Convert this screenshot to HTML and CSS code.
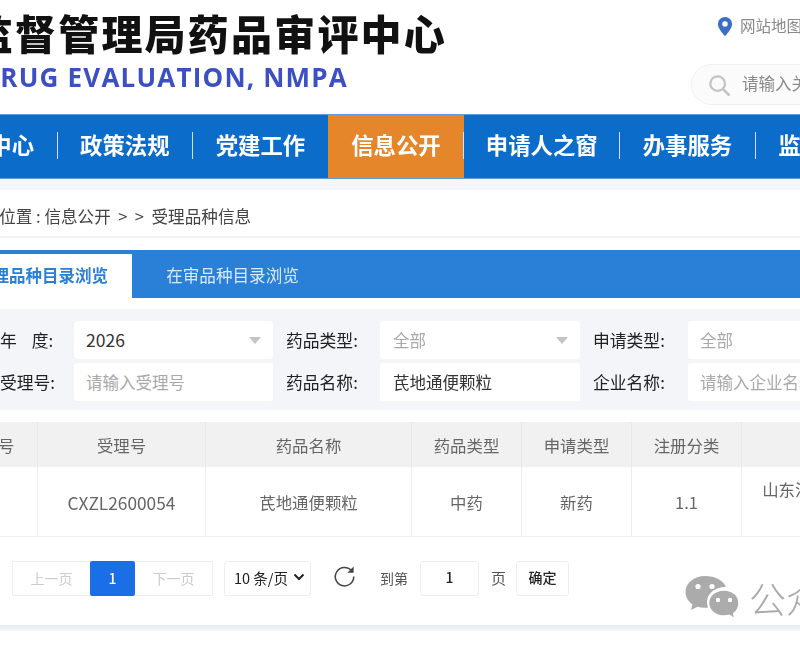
FILE: index.html
```html
<!DOCTYPE html>
<html lang="zh-CN">
<head>
<meta charset="utf-8">
<title>受理品种信息</title>
<link rel="stylesheet" href="styles.css">
</head>
<body>
<div class="page">
  <header class="header">
    <div class="brand">
      <div class="brand-cn">国家药品监督管理局药品审评中心</div>
      <div class="brand-en">CENTER FOR DRUG EVALUATION, NMPA</div>
    </div>
    <div class="tools">
      <div class="sitemap">
        <svg class="pin" viewBox="0 0 16 20" width="16" height="19"><path fill="#3b6fc4" fill-rule="evenodd" d="M8 0a7.500 7.500 0 0 0-7.500 7.500C.5 12.500 8 20 8 20s7.500-7.500 7.500-12.500A7.500 7.500 0 0 0 8 0zm0 10.300a2.900 2.900 0 1 1 0-5.800 2.900 2.900 0 0 1 0 5.800z"/></svg>
        <span>网站地图</span>
      </div>
      <div class="search">
        <svg viewBox="0 0 24 24" width="22" height="22"><circle cx="10.500" cy="10.500" r="8" fill="none" stroke="#c4c4c4" stroke-width="2.500"/><path d="M16.500 16.500l6 6" stroke="#c4c4c4" stroke-width="3" stroke-linecap="round"/></svg>
        <span>请输入关键字</span>
      </div>
    </div>
  </header>

  <nav class="nav">
    <a class="nav-item">审评中心</a><i class="nav-sep"></i>
    <a class="nav-item">政策法规</a><i class="nav-sep"></i>
    <a class="nav-item">党建工作</a><i class="nav-sep"></i>
    <a class="nav-item active">信息公开</a><i class="nav-sep"></i>
    <a class="nav-item wide">申请人之窗</a><i class="nav-sep"></i>
    <a class="nav-item">办事服务</a><i class="nav-sep"></i>
    <a class="nav-item">监管动态</a>
  </nav>
  <div class="band"></div>

  <div class="crumb">当前位置 : 信息公开 &nbsp;&gt; &nbsp;&gt;&nbsp; 受理品种信息</div>

  <div class="tabs">
    <div class="tab active">受理品种目录浏览</div>
    <div class="tab">在审品种目录浏览</div>
  </div>

  <section class="filters">
    <div class="frow">
      <label class="lab lab1"><span class="gap">年</span>度:</label>
      <div class="field w1 val year">2026<b class="caret"></b></div>
      <label class="lab lab2">药品类型:</label>
      <div class="field w2 ph">全部<b class="caret"></b></div>
      <label class="lab lab3">申请类型:</label>
      <div class="field w3 ph">全部</div>
    </div>
    <div class="frow">
      <label class="lab lab1">受理号:</label>
      <div class="field w1 ph">请输入受理号</div>
      <label class="lab lab2">药品名称:</label>
      <div class="field w2 val">芪地通便颗粒</div>
      <label class="lab lab3">企业名称:</label>
      <div class="field w3 ph">请输入企业名称</div>
    </div>
  </section>

  <table class="grid">
    <colgroup>
      <col class="c1"><col class="c2"><col class="c3"><col class="c4"><col class="c4"><col class="c4"><col class="c5">
    </colgroup>
    <thead>
      <tr><th>序号</th><th>受理号</th><th>药品名称</th><th>药品类型</th><th>申请类型</th><th>注册分类</th><th>企业名称</th></tr>
    </thead>
    <tbody>
      <tr><td class="num">1</td><td class="code">CXZL2600054</td><td>芪地通便颗粒</td><td>中药</td><td>新药</td><td>1.1</td><td class="co">山东汉方制药有限公司</td></tr>
    </tbody>
  </table>

  <div class="pager">
    <div class="pbox prev">上一页</div>
    <div class="pcur">1</div>
    <div class="pbox next">下一页</div>
    <div class="psize">10 条/页<svg viewBox="0 0 12 8" width="12" height="8"><path d="M1.500 1.500L6 6l4.500-4.500" fill="none" stroke="#222" stroke-width="2"/></svg></div>
    <svg class="refresh" viewBox="0 0 24 24" width="23" height="23"><path d="M19.500 6.200A9.600 9.600 0 1 0 21.600 12" fill="none" stroke="#444" stroke-width="1.600"/><path d="M21.500 1.500v6.500h-6.500z" fill="#444"/></svg>
    <span class="ptxt goto">到第</span>
    <div class="pinput">1</div>
    <span class="ptxt pg">页</span>
    <div class="pok">确定</div>
  </div>
  <div class="shadow"></div>

  <div class="mark">
    <svg viewBox="0 0 54 44" width="54" height="44">
      <path fill="#ababab" d="M20 0C9 0 .5 7.200.5 16c0 5 2.700 9.400 7 12.400L6 34l6.300-3.300c2.400.7 5 1.100 7.700 1.100 1 0 2-.1 3-.2-.6-1.700-1-3.600-1-5.500C22 17.500 30.500 11 40 11c.5 0 .8 0 1 .1C38.500 4.600 30 0 20 0z"/>
      <path fill="#ababab" stroke="#fff" stroke-width="1.500" d="M39 14c-8.700 0-15.500 5.800-15.500 13s6.800 13 15.500 13c2 0 3.800-.3 5.500-.8L50 43l-1.300-5.500c3.300-2.400 5.300-6.100 5.300-10.500 0-7.200-6.300-13-15-13z"/>
      <circle cx="13" cy="10.500" r="2.600" fill="#fff"/><circle cx="27" cy="10.500" r="2.600" fill="#fff"/>
      <circle cx="33" cy="24" r="2.200" fill="#fff"/><circle cx="45" cy="24" r="2.200" fill="#fff"/>
    </svg>
    <span>公众号</span>
  </div>
</div>
</body>
</html>
```
FILE: styles.css
```css
* { box-sizing: border-box; }
html, body { margin: 0; padding: 0; background: #fff; }
body { width: 800px; height: 650px; overflow: hidden; }
.page {
  position: relative;
  width: 800px;
  height: 650px;
  overflow: hidden;
  font-family: "Noto Sans CJK SC", "Noto Sans", sans-serif;
  font-size: 16.600px;
  color: #444;
  filter: blur(0.45px);
}

/* header */
.header { display: flex; height: 114px; }
.brand { width: 445px; display: flex; flex-direction: column; align-items: flex-end; flex: none; white-space: nowrap; }
.brand-cn { font-size: 41px; font-weight: 900; letter-spacing: 2.200px; line-height: 44px; margin-top: 10px; margin-right: -2px; color: #111; }
.brand-en { font-family: "Open Sans", sans-serif; font-size: 26px; font-weight: 700; letter-spacing: 1.200px; line-height: 30px; margin-top: 8px; margin-right: 97px; color: #3c50c4; }
.tools { margin-left: 246px; width: 200px; flex: none; white-space: nowrap; }
.sitemap { display: flex; align-items: center; gap: 7px; margin: 17px 0 0 26px; height: 19px; color: #8a8a8a; font-size: 15.500px; line-height: 1; }
.sitemap span { padding-bottom: 2px; }
.search { display: flex; align-items: center; gap: 12px; margin-top: 28px; height: 41px; padding: 0 0 0 16px; border: 1px solid #eeeff2; border-radius: 21px 0 0 21px; background: #fbfbfc; color: #8a8a8a; font-size: 16.500px; }
.search span { padding-bottom: 3px; }

/* nav */
.nav { display: flex; align-items: center; height: 65px; margin-left: -78px; width: 1000px; background: #0c6cc9; border-top: 1px solid #5a9fe0; border-bottom: 1px solid #5a9fe0; white-space: nowrap; }
.nav-item { display: flex; align-items: center; height: 63px; padding: 0 22.500px 5px; color: #fff; font-size: 22.400px; font-weight: 700; flex: none; }
.nav-item.active { margin: 0 -1px; padding: 0 23.500px 5px; background: #e5862b; }
.nav-item.wide { padding: 0 21.500px 5px; }
.nav-sep { width: 1px; height: 27px; margin-bottom: 2px; background: #cfe2f5; flex: none; }
.band { height: 11px; background: #f3f7fc; }

/* breadcrumb */
.crumb { height: 48px; margin-left: -34px; padding-top: 13px; line-height: 26px; border-bottom: 2px solid #f1f1f1; white-space: nowrap; color: #444; }

/* tabs */
.tabs { display: flex; align-items: flex-end; height: 48px; margin: 12px 0 0 -32px; width: 832px; padding-top: 3px; background: #2a80d6; }
.tab { height: 44px; line-height: 42px; font-size: 16.600px; width: 199px; padding-left: 2px; text-align: center; color: #d9e9fa; flex: none; }
.tab.active { width: 164px; padding: 0 16px 0 0; background: #fff; color: #2a80d6; font-weight: 700; font-size: 16.500px; }

/* filters */
.filters { height: 101px; margin-top: 11px; padding-top: 12px; background: #f4f5f9; }
.frow { display: flex; align-items: center; height: 38px; margin-bottom: 4px; white-space: nowrap; }
.lab { flex: none; color: #222; font-size: 16.800px; font-weight: 400; }
.lab1 { width: 74px; text-align: right; padding-right: 21px; }
.gap { margin-right: 15px; }
.lab2 { width: 107px; padding-left: 13px; }
.lab3 { width: 108px; padding-left: 13px; }
.field { position: relative; flex: none; height: 38px; line-height: 38px; padding-left: 13px; background: #fff; border-radius: 3px; font-size: 16.500px; }
.w1 { width: 199px; padding-left: 12px; }
.w2 { width: 200px; }
.w3 { width: 200px; padding-left: 12px; }
.val { color: #333; }
.year { font-size: 17.500px; }
.ph { color: #a9a9a9; }
.caret { position: absolute; right: 12px; top: 16px; border: 6.500px solid transparent; border-bottom: 0; border-top: 7px solid #c4c4c4; }

/* table */
.grid { width: 972px; margin: 12px 0 0 -42px; border-collapse: collapse; table-layout: fixed; font-size: 16.400px; }
.c1 { width: 79px; } .c2 { width: 168px; } .c3 { width: 206px; } .c4 { width: 110px; } .c5 { width: 189px; }
.grid th { height: 45px; padding: 0; background: #f1f1f1; border: 1px solid #e8e8e8; border-width: 0 1px; color: #666; font-weight: 400; text-align: center; }
.grid td { height: 69px; padding: 2px 21px 0; border: 1px solid #eee; border-top: 0; color: #666; text-align: center; line-height: 25px; }
.grid td.num { padding-right: 32px; padding-left: 10px; }
.grid td.code { font-size: 17.300px; }
.grid td.co { padding: 0 20px; line-height: 24px; }

/* pager */
.pager { display: flex; align-items: center; height: 35px; margin: 24px 0 0 12px; white-space: nowrap; font-size: 14px; }
.pbox { width: 78px; height: 35px; line-height: 32px; text-align: center; border: 1px solid #eee; color: #ccc; flex: none; }
.prev { border-right: 0; }
.next { border-left: 0; margin-right: 11px; }
.pcur { width: 45px; height: 35px; line-height: 34px; text-align: center; background: #1a6ee6; color: #fff; border-radius: 2px; flex: none; font-weight: 500; }
.psize { display: flex; align-items: center; justify-content: space-between; width: 87px; height: 35px; padding: 0 5px 2px 9px; border: 1px solid #eee; border-radius: 3px; color: #222; font-size: 14.500px; flex: none; }
.refresh { margin-left: 22px; margin-bottom: 3px; flex: none; }
.ptxt { color: #555; flex: none; line-height: 32px; }
.goto { margin-left: 24px; }
.pinput { width: 59px; height: 35px; line-height: 31px; margin-left: 12px; text-align: center; border: 1px solid #eee; border-radius: 3px; color: #222; font-weight: 500; flex: none; }
.pg { margin-left: 12px; font-size: 15px; }
.pok { width: 53px; height: 35px; line-height: 31px; margin-left: 10px; text-align: center; border: 1px solid #eee; border-radius: 3px; color: #222; font-weight: 500; flex: none; }
.shadow { height: 6px; margin-top: 29px; background: linear-gradient(#e2eaf4, #f4f7fb); }

/* watermark */
.mark { position: absolute; left: 685px; top: 571px; display: flex; align-items: center; gap: 10px; white-space: nowrap; color: #aaa; font-size: 37px; font-weight: 300; }
```
